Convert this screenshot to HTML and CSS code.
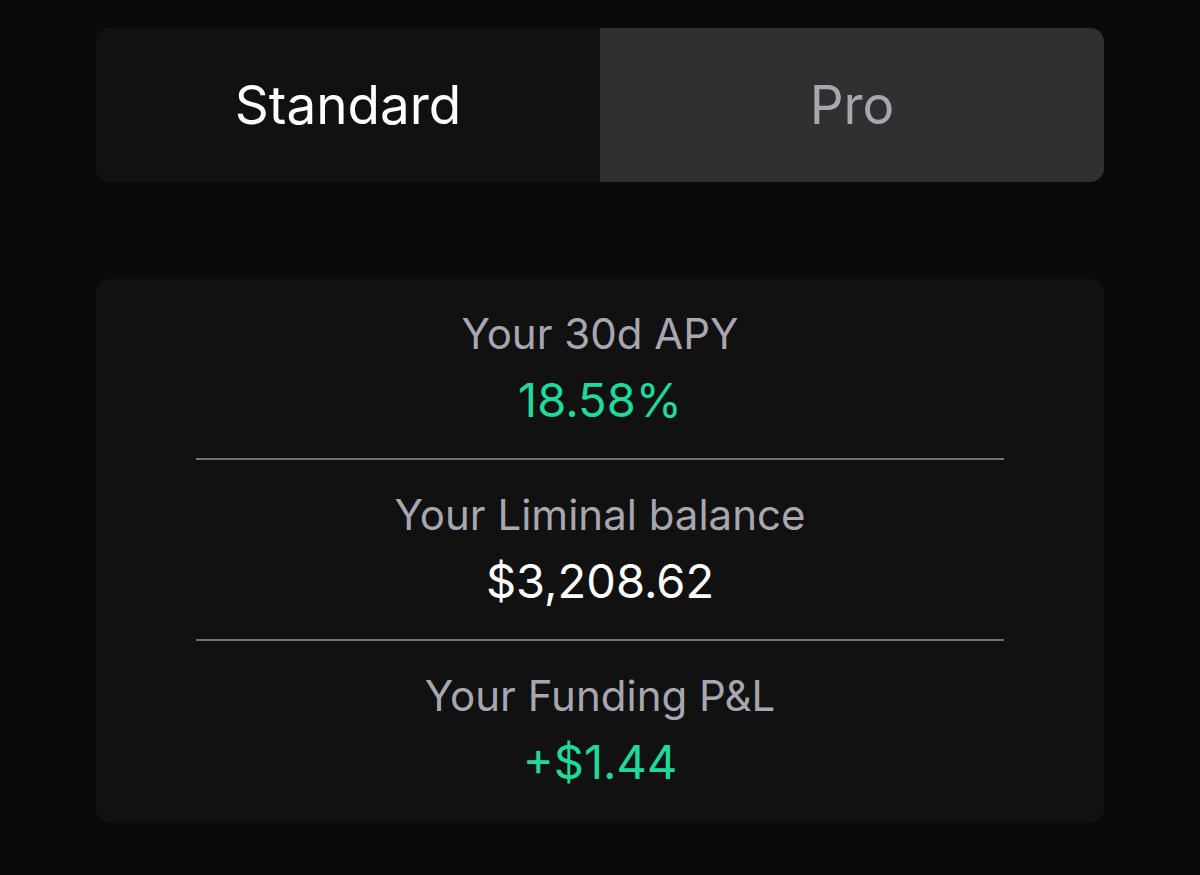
FILE: index.html
```html
<!DOCTYPE html>
<html lang="en">

<head>
    <meta charset="UTF-8">
    <meta name="viewport" content="width=device-width, initial-scale=1.0">
    <title>Vault Stats</title>
    <link rel="stylesheet" href="styles.css">
</head>

<body>
    <div class="tabs">
        <button class="tab active">Standard</button>
        <button class="tab">Pro</button>
    </div>

    <div class="card">
        <div class="stat">
            <div class="label">Your 30d APY</div>
            <div class="value green">18.58%</div>
        </div>
        <div class="divider"></div>
        <div class="stat">
            <div class="label">Your Liminal balance</div>
            <div class="value">$3,208.62</div>
        </div>
        <div class="divider"></div>
        <div class="stat">
            <div class="label">Your Funding P&amp;L</div>
            <div class="value green">+$1.44</div>
        </div>
    </div>
</body>

</html>
```

FILE: styles.css
```css
body {
    margin: 0;
    padding: 28px 96px;
    background: #0a0a0a;
    font-family: Inter, "Noto Sans", sans-serif;
}

.tabs {
    display: flex;
    height: 154px;
    border-radius: 14px;
    overflow: hidden;
    background: #111111;
}

.tab {
    flex: 1;
    border: none;
    background: #111111;
    color: #a8a6b0;
    font-family: inherit;
    font-size: 53px;
    cursor: pointer;
}

.tab.active {
    color: #ffffff;
}

.tab:not(.active) {
    background: #303030;
}

.card {
    margin-top: 97px;
    padding: 30px 100px 33px;
    border-radius: 14px;
    background: #111111;
}

.stat {
    text-align: center;
}

.label {
    color: #a8a6b0;
    font-size: 42px;
    line-height: 50px;
}

.value {
    color: #ffffff;
    font-size: 47px;
    line-height: 56px;
    margin-top: 13px;
}

.green {
    color: #1fd99a;
}

.divider {
    height: 2px;
    margin: 30px 0;
    background: #737373;
}
```
